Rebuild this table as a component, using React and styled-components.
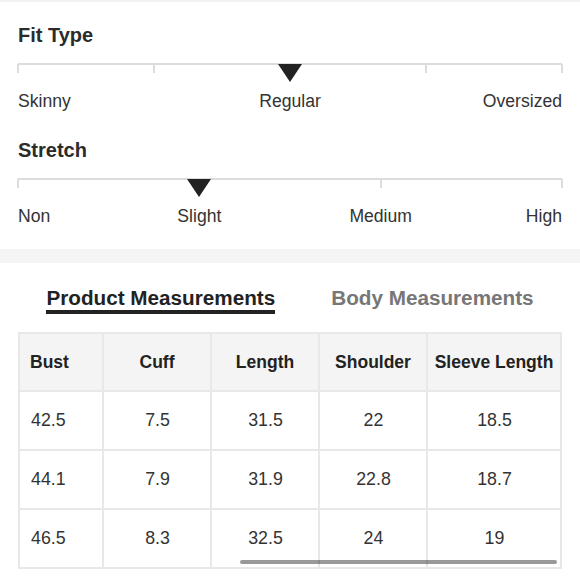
import React from "react";
import styled, { createGlobalStyle } from "styled-components";

const GlobalStyle = createGlobalStyle`
  body {
    margin: 0;
    padding: 0;
    background: #fff;
    font-family: 'Liberation Sans', Arial, sans-serif;
    color: #333;
  }
`;

const Page = styled.div`
  width: 580px;
  border-top: 2px solid #f2f2f2;
`;

const SliderSection = styled.section`
  display: flex;
  flex-direction: column;
  gap: 27px;
  padding: 21px 18px 23px;
`;

const Scale = styled.div`
  display: flex;
  flex-direction: column;
`;

const Title = styled.h3`
  margin: 0;
  font-size: 20px;
  line-height: 24px;
  font-weight: 700;
  color: #2b2b2b;
`;

const Track = styled.div`
  margin-top: 16px;
  height: 26px;
  border-top: 2px solid #dcdcdc;
  display: flex;
  justify-content: space-between;
  align-items: flex-start;
`;

// zero width stop, so space-between puts each at an exact fraction
const Stop = styled.div`
  width: 0;
  display: flex;
  justify-content: center;
`;

const Tick = styled.div`
  flex: none;
  width: 2px;
  height: 9px;
  margin-top: -1px;
  background: #dcdcdc;
`;

const Marker = styled.div`
  flex: none;
  width: 0;
  height: 0;
  margin-top: -1px;
  border-left: 12px solid transparent;
  border-right: 12px solid transparent;
  border-top: 18px solid #222;
`;

const Labels = styled.div`
  display: flex;
  justify-content: space-between;
`;

const Label = styled.div`
  width: 0;
  display: flex;
  justify-content: ${(p) => p.$align};
  white-space: nowrap;
  font-size: 17.6px;
  line-height: 20px;
  color: #333;
`;

const Band = styled.div`
  height: 14px;
  background: #f5f5f5;
`;

const MeasureSection = styled.section`
  padding: 23px 18px 0;
`;

const Tabs = styled.div`
  display: flex;
  justify-content: center;
  gap: 56px;
`;

const Tab = styled.div`
  font-size: 20.7px;
  line-height: 24px;
  font-weight: 700;
  color: ${(p) => (p.$active ? "#222" : "#777")};
  border-bottom: 4px solid ${(p) => (p.$active ? "#222" : "transparent")};
`;

const TableWrap = styled.div`
  position: relative;
  margin-top: 18px;
  display: grid;
  grid-template-columns: 84px 108px 108px 108px 134px;
  grid-template-rows: 58px repeat(3, 59px);
  border-top: 2px solid #e8e8e8;
  border-left: 2px solid #e8e8e8;
`;

const Cell = styled.div`
  box-sizing: border-box;
  display: flex;
  align-items: center;
  justify-content: ${(p) => (p.$first ? "flex-start" : "center")};
  padding: 0 10px 0 ${(p) => (p.$head ? 10 : 11)}px;
  border-right: 2px solid #e8e8e8;
  border-bottom: 2px solid #e8e8e8;
  font-size: ${(p) => (p.$head ? 17.5 : 17.8)}px;
  white-space: nowrap;
  background: ${(p) => (p.$head ? "#f4f4f4" : "#fff")};
  font-weight: ${(p) => (p.$head ? 700 : 400)};
  color: ${(p) => (p.$head ? "#222" : "#333")};
`;

const ScrollThumb = styled.div`
  position: absolute;
  left: 220px;
  right: 5px;
  bottom: 5px;
  height: 4px;
  border-radius: 2px;
  background: rgba(0, 0, 0, 0.4);
`;

const scales = [
  {
    title: "Fit Type",
    stops: 5,
    marker: 2,
    labels: ["Skinny", "Regular", "Oversized"],
  },
  {
    title: "Stretch",
    stops: 4,
    marker: 1,
    labels: ["Non", "Slight", "Medium", "High"],
  },
];

const columns = ["Bust", "Cuff", "Length", "Shoulder", "Sleeve Length"];
const rows = [
  ["42.5", "7.5", "31.5", "22", "18.5"],
  ["44.1", "7.9", "31.9", "22.8", "18.7"],
  ["46.5", "8.3", "32.5", "24", "19"],
];

const alignFor = (i, n) =>
  i === 0 ? "flex-start" : i === n - 1 ? "flex-end" : "center";

const App = () => {
  return (
    <>
      <GlobalStyle />
      <Page>
        <SliderSection>
          {scales.map((s) => (
            <Scale key={s.title}>
              <Title>{s.title}</Title>
              <Track>
                {Array.from({ length: s.stops }).map((_, i) => (
                  <Stop key={i}>{i === s.marker ? <Marker /> : <Tick />}</Stop>
                ))}
              </Track>
              <Labels>
                {s.labels.map((l, i) => (
                  <Label key={l} $align={alignFor(i, s.labels.length)}>
                    {l}
                  </Label>
                ))}
              </Labels>
            </Scale>
          ))}
        </SliderSection>
        <Band />
        <MeasureSection>
          <Tabs>
            <Tab $active>Product Measurements</Tab>
            <Tab>Body Measurements</Tab>
          </Tabs>
          <TableWrap>
            {columns.map((c, i) => (
              <Cell key={c} $head $first={i === 0}>
                {c}
              </Cell>
            ))}
            {rows.map((r, ri) =>
              r.map((v, i) => (
                <Cell key={ri + "-" + i} $first={i === 0}>
                  {v}
                </Cell>
              ))
            )}
            <ScrollThumb />
          </TableWrap>
        </MeasureSection>
      </Page>
    </>
  );
};

export default App;
